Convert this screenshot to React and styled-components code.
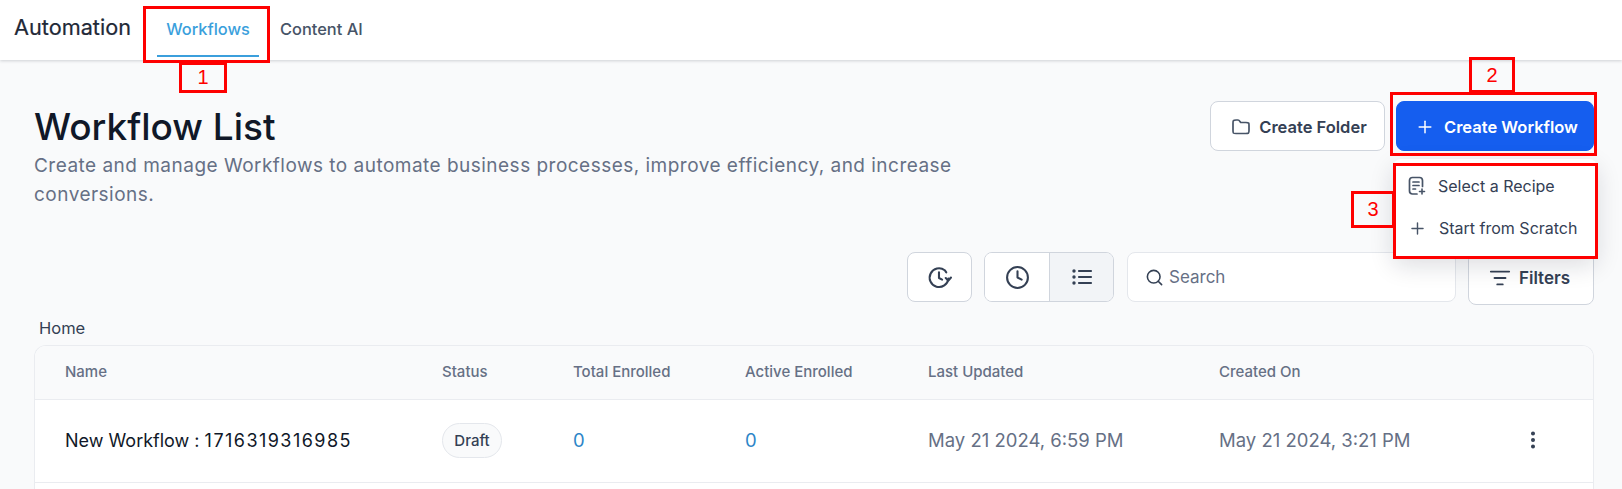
import React from "react";
import styled, { createGlobalStyle } from "styled-components";
import { Plus, Clock, Search, ListFilter, EllipsisVertical } from "lucide-react";

const Global = createGlobalStyle`
  html, body { margin: 0; padding: 0; background: #f9fafb; }
  body { font-family: Inter, "Noto Sans", sans-serif; width: 1622px; height: 489px; overflow: hidden; }
  * { box-sizing: border-box; }
`;
const Page = styled.div`position: relative; width: 1622px; height: 489px; overflow: hidden;`;
const TopBar = styled.header`
  height: 60px; background: #fff; box-shadow: 0 1px 3px rgba(16,24,40,.18);
  display: flex; align-items: stretch; padding-left: 14px; position: relative;
`;
const Brand = styled.div`font-size: 21.7px; font-weight: 400; line-height: 54px; width: 130px; color: #1f2937; -webkit-text-stroke: .2px #1f2937;`;
const Tab = styled.div`
  margin: 0 ${p => p.$active ? "21px" : "0"} 0 ${p => p.$active ? "13px" : "0"};
  width: ${p => p.$active ? "102px" : "auto"}; height: 57px; line-height: 58px;
  text-align: center; font-size: 16.4px; font-weight: 500; white-space: nowrap;
  color: ${p => p.$active ? "#3b9fdc" : "#475467"};
  border-bottom: ${p => p.$active ? "2px solid #3b9fdc" : "none"};
`;
const Main = styled.main`padding: 41px 28px 0 34px;`;
const HeadRow = styled.div`display: flex; justify-content: space-between; align-items: flex-start; height: 151px;`;
const TitleBlock = styled.div`width: 950px; padding-top: 1px;`;
const Title = styled.h1`margin: 0; font-size: 37px; font-weight: 500; line-height: 49px; color: #101828;`;
const Desc = styled.p`margin: 0; font-size: 19px; line-height: 29px; color: #667085; letter-spacing: .48px;`;
const Actions = styled.div`display: flex; gap: 11px; position: relative;`;
const Button = styled.div`
  display: flex; align-items: center; justify-content: center; gap: ${p => p.$primary ? "9px" : "8px"};
  height: 50px; width: ${p => p.$w}px; border-radius: 8px; font-size: 16.5px; font-weight: 600; padding: 1px 0 0 3px;
  background: ${p => p.$primary ? "#155eef" : "#fff"};
  color: ${p => p.$primary ? "#fff" : "#344054"};
  border: 1px solid ${p => p.$primary ? "#155eef" : "#d0d5dd"};
`;
const Menu = styled.div`
  position: absolute; top: 58px; right: -3px; width: 204px; height: 99px; background: #fff; border-radius: 8px;
  box-shadow: 0 8px 24px rgba(16,24,40,.14); padding-top: 6px; z-index: 2;
`;
const MenuItem = styled.div`
  height: 42px; display: flex; align-items: center; gap: 12px; padding-left: 15px;
  font-size: 16px; color: #344054;
`;
const Toolbar = styled.div`display: flex; align-items: flex-start; justify-content: flex-end; gap: 12px; height: 61px;`;
const IconBtn = styled.div`
  width: 65px; height: 50px; background: #fff; border: 1px solid #d0d5dd; border-radius: 8px;
  display: flex; align-items: center; justify-content: center; color: #344054;
`;
const Group = styled.div`
  display: flex; width: 130px; height: 50px; border: 1px solid #d0d5dd; border-radius: 8px; overflow: hidden; background: #fff;
`;
const GroupCell = styled.div`
  flex: ${p => p.$on ? "0 0 64px" : "1"}; display: flex; align-items: center; justify-content: center; color: #344054;
  background: ${p => p.$on ? "#f2f4f7" : "#fff"};
  & + & { border-left: 1px solid #d0d5dd; }
`;
const SearchBox = styled.div`
  width: 329px; height: 50px; margin-left: 1px; background: #fff; border: 1px solid #e4e7ec; border-radius: 8px;
  display: flex; align-items: center; gap: 5px; padding-left: 17px; color: #667085; font-size: 17px;
  svg { color: #344054; }
`;
const FilterBtn = styled(Button)`width: 126px; height: 53px; gap: 8px; font-size: 17px; padding: 0 3px 1px 0;`;
const Crumb = styled.div`font-size: 16.5px; line-height: 20px; color: #344054; padding: 5px 0 0 5px; height: 32px;`;
const Table = styled.div`
  width: 1560px; border: 1px solid #eaecf0; border-bottom: none; border-radius: 12px 12px 0 0; overflow: hidden; background: #fff; height: 200px;
`;
const Row = styled.div`
  display: grid; grid-template-columns: 377px 131px 172px 183px 291px 1fr 71px; align-items: center;
  padding: 0 0 2px 30px; height: ${p => p.$h}px; border-bottom: 1px solid #eaecf0;
  background: ${p => p.$head ? "#f9fafb" : "#fff"};
`;
const Th = styled.div`font-size: 15px; font-weight: 500; color: #667085;`;
const Td = styled.div`font-size: 18.5px; color: #667085;`;
const Name = styled(Td)`font-size: 18px; color: #101828; letter-spacing: 0;`;
const Digits = styled.span`letter-spacing: 1.45px;`;
const Num = styled(Td)`color: #2e86c8;`;
const Badge = styled.span`
  display: inline-flex; align-items: center; justify-content: center; width: 60px; height: 35px;
  border-radius: 18px; border: 1px solid #e4e7ec; background: #f9fafb; font-size: 15px; font-weight: 500; color: #344054;
`;
const Kebab = styled.div`color: #344054; display: flex;`;
const Note = styled.div`
  position: absolute; left: ${p => p.$x}px; top: ${p => p.$y}px; width: ${p => p.$w}px; height: ${p => p.$h}px;
  border: 3px solid #fe0000; z-index: 5; display: flex; align-items: center; justify-content: center;
  font-family: "Liberation Sans", sans-serif; font-size: 20px; color: #fe0000;
`;

const FolderIcon = () => (
  <svg width="20" height="20" viewBox="0 0 20 20" fill="none" stroke="#475467" strokeWidth="1.7" strokeLinejoin="round">
    <path d="M2 6.200c0-1.400 0-2.200.4-2.600C2.800 3.200 3.500 3 5 3h2c.9 0 1.300.4 1.800 1.200L9.700 5.500H15c1.600 0 2.300.2 2.700.6.3.4.3 1 .3 2.400v4.700c0 1.600 0 2.300-.5 2.800-.5.4-1.200.5-2.700.5H5c-1.500 0-2.200-.1-2.600-.5C2 15.500 2 14.800 2 13.200z" />
  </svg>
);
const RecipeIcon = () => (
  <svg width="18" height="20" viewBox="0 0 18 20" fill="none" stroke="#475467" strokeWidth="1.7" strokeLinecap="round">
    <path d="M9 18H4.500C2.500 18 1.500 17 1.500 15V4.500C1.500 2.500 2.500 1.500 4.500 1.500h7c2 0 3 1 3 3v6" />
    <path d="M5 6h6M5 9.500h6M5 13h2.500" />
    <path d="M14 13v5M11.500 15.500h5" strokeWidth="1.6" />
  </svg>
);
const HistoryIcon = () => (
  <svg width="25" height="25" viewBox="0 0 24 24" fill="none" stroke="#344054" strokeWidth="2" strokeLinecap="round" strokeLinejoin="round">
    <path d="M20.500 13a9 9 0 1 1-3.500-8l1.500 2" />
    <path d="M11.500 7v5.500l3 1.500" />
    <path d="M18 12.500l2.500 2.500 2.500-3" />
  </svg>
);
const ListIcon = () => (
  <svg width="24" height="24" viewBox="0 0 24 24" fill="none" stroke="#344054" strokeWidth="2.200" strokeLinecap="round">
    <path d="M9 6h12M9 12h12M9 18h12" />
    <circle cx="4" cy="6" r="1.700" fill="#344054" stroke="none" />
    <circle cx="4" cy="12" r="1.700" fill="#344054" stroke="none" />
    <circle cx="4" cy="18" r="1.700" fill="#344054" stroke="none" />
  </svg>
);

export default function App() {
  return (
    <Page>
      <Global />
      <TopBar>
        <Brand>Automation</Brand>
        <Tab $active>Workflows</Tab>
        <Tab>Content AI</Tab>
      </TopBar>
      <Main>
        <HeadRow>
          <TitleBlock>
            <Title>Workflow List</Title>
            <Desc>Create and manage Workflows to automate business processes, improve efficiency, and increase conversions.</Desc>
          </TitleBlock>
          <Actions>
            <Button $w={175}><FolderIcon />Create Folder</Button>
            <Button $primary $w={198}><Plus size={20} strokeWidth={1.8} />Create Workflow</Button>
            <Menu>
              <MenuItem><RecipeIcon />Select a Recipe</MenuItem>
              <MenuItem><Plus size={19} strokeWidth={1.8} color="#475467" />Start from Scratch</MenuItem>
            </Menu>
          </Actions>
        </HeadRow>
        <Toolbar>
          <IconBtn><HistoryIcon /></IconBtn>
          <Group>
            <GroupCell><Clock size={25} strokeWidth={2} /></GroupCell>
            <GroupCell $on><ListIcon /></GroupCell>
          </Group>
          <SearchBox><Search size={19} strokeWidth={2} />Search</SearchBox>
          <FilterBtn><ListFilter size={22} strokeWidth={2} />Filters</FilterBtn>
        </Toolbar>
        <Crumb>Home</Crumb>
        <Table>
          <Row $head $h={54}>
            <Th>Name</Th><Th>Status</Th><Th>Total Enrolled</Th><Th>Active Enrolled</Th><Th>Last Updated</Th><Th>Created On</Th><Th />
          </Row>
          <Row $h={83}>
            <Name>New Workflow : <Digits>1716319316985</Digits></Name>
            <div><Badge>Draft</Badge></div>
            <Num>0</Num>
            <Num>0</Num>
            <Td>May 21 2024, 6:59 PM</Td>
            <Td>May 21 2024, 3:21 PM</Td>
            <Kebab><EllipsisVertical size={22} strokeWidth={2.4} /></Kebab>
          </Row>
        </Table>
      </Main>
      <Note $x={143} $y={6} $w={127} $h={57} />
      <Note $x={179} $y={62} $w={48} $h={31}>1</Note>
      <Note $x={1390} $y={92} $w={207} $h={64} />
      <Note $x={1469} $y={57} $w={46} $h={36}>2</Note>
      <Note $x={1393} $y={163} $w={205} $h={96} />
      <Note $x={1351} $y={191} $w={44} $h={37}>3</Note>
    </Page>
  );
}
